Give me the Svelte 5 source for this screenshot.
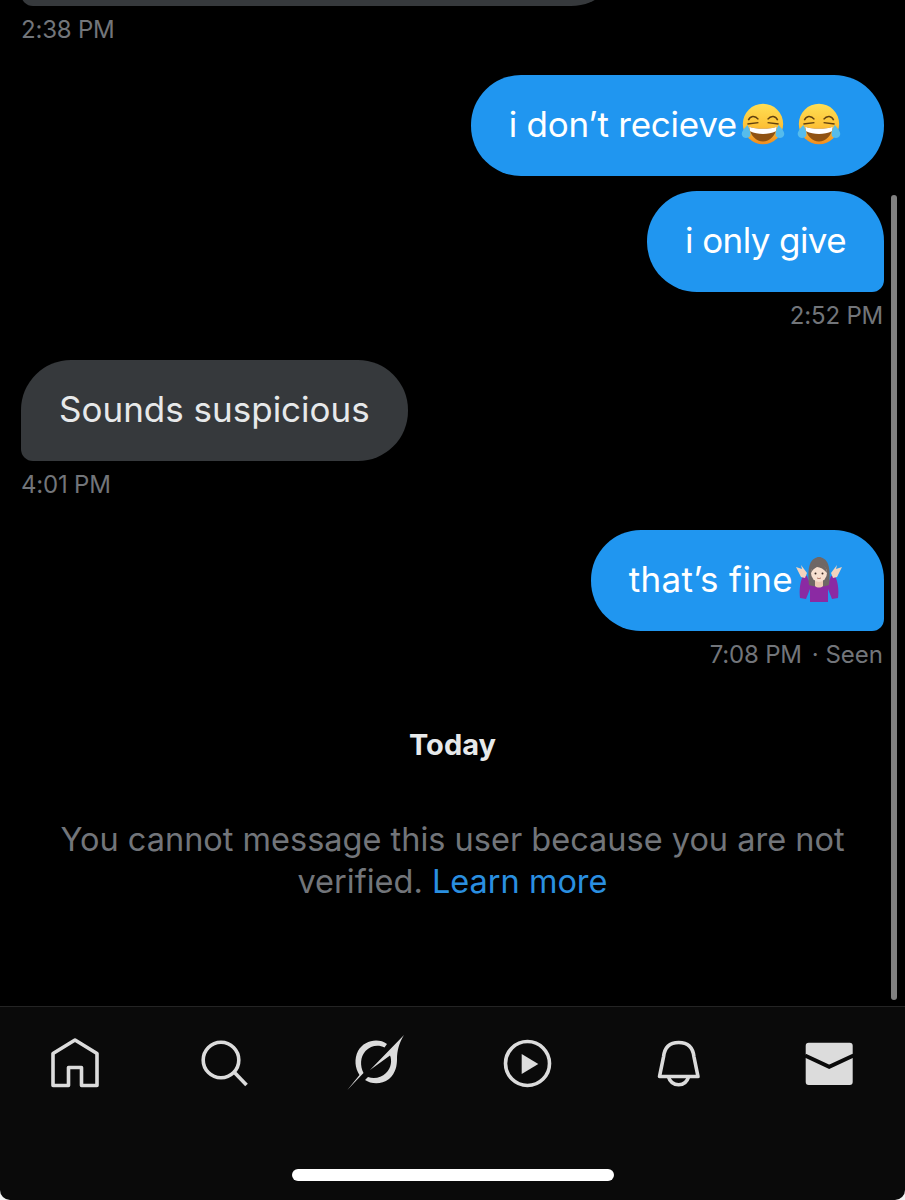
<script lang="ts">
  const tabs = ['home', 'search', 'explore', 'play', 'bell', 'mail'];
</script>

<div class="screen">
  <div class="messages">
    <div class="bubble theirs cut"></div>
    <div class="time">2:38 PM</div>

    <div class="bubble mine first">
      i don’t recieve<svg class="emoji laugh" viewBox="0 0 48 48">
        <use href="#laugh" />
      </svg><svg class="emoji laugh" viewBox="0 0 48 48">
        <use href="#laugh" />
      </svg>
    </div>
    <div class="bubble mine tight">i only give</div>
    <div class="time right short">2:52 PM</div>

    <div class="bubble theirs">Sounds suspicious</div>
    <div class="time">4:01 PM</div>

    <div class="bubble mine wide">
      that’s fine<svg class="emoji shrug" viewBox="0 0 48 46">
        <path d="M8 20 C5 26 4 34 5 42 L11 43 L15 33 L15 46 L33 46 L33 33 L37 43 L43 42 C44 34 43 26 40 20 L36 20 C35 24 33 27 30 28 L18 28 C15 27 13 24 12 20 Z" fill="#8b2aa3" />
        <path d="M1 11 L7 13 L6 9 L9 13 L12 17 L10 22 L6 21 Z M47 11 L41 13 L42 9 L39 13 L36 17 L38 22 L42 21 Z" fill="#f2d3bd" />
        <path d="M14 29 C13 20 13 14 15 8 C17 3 21 1 24 1 C27 1 31 3 33 8 C35 14 35 20 34 29 C28 31 20 31 14 29 Z" fill="#6f6765" />
        <path d="M20 24 H28 V30 C26 32 22 32 20 30 Z" fill="#eccab4" />
        <ellipse cx="24" cy="17" rx="8" ry="9" fill="#f8e0d0" />
        <path d="M16 17 C16 10 20 7 25 7 C29 8 32 12 32 17 C29 13 25 11 22 11 C20 12 17 14 16 17 Z" fill="#6f6765" />
        <circle cx="20.5" cy="17.5" r="1" fill="#3a2a24" />
        <circle cx="27.5" cy="17.5" r="1" fill="#3a2a24" />
        <path d="M22 22 Q24 23.2 26 22" stroke="#b57b6c" stroke-width="1" fill="none" />
      </svg>
    </div>
    <div class="time right"><span>7:08 PM</span><span class="seen">· Seen</span></div>

    <div class="today">Today</div>
    <p class="notice">
      You cannot message this user because you are not verified. <span class="link">Learn more</span>
    </p>
  </div>

  <div class="scrollbar"></div>

  <nav class="nav">
    <div class="tabs">
      {#each tabs as tab}
        <svg class="tab" viewBox="0 0 60 60">
          {#if tab === 'home'}
            <path class="line" d="M30 7 L52 20.5 V52.5 H36.5 V34.5 H23.5 V52.5 H8 V20.5 Z" />
          {:else if tab === 'search'}
            <circle class="line" cx="25" cy="27" r="17.8" />
            <path class="line" d="M38.5 39.5 L50.5 52" />
          {:else if tab === 'explore'}
            <path class="solid" d="M57 2 L23 37 L43 22.5 C45 27 44.5 35 39 40 C34 45 27 46 21 44 L18 47 C24 51 34 52 42 46 C49 40 50 32 50 26 C50 18 52 10 57 2 Z" />
            <path class="solid" d="M0.3 57 L12.5 42 C8 35 7 26 11 18 C15 11 22 7.5 29 7.5 C33 7.5 37 8.5 40 11 L37.5 14.5 C32 11.5 24 12 18.5 18 C13 24 13 33 16.5 40 Z" />
          {:else if tab === 'play'}
            <circle class="line" cx="29.5" cy="30.5" r="22" />
            <path class="solid" d="M23.7 21 L40.3 31 L23.7 41 Z" />
          {:else if tab === 'bell'}
            <path class="line" d="M10.5 43.5 L14.5 24 C15.5 14 21 9.5 29.7 9.5 C38.5 9.5 44 14 45 24 L49 43.5 Z" />
            <path class="line" d="M19.5 44 C21 49 25 51.7 29.7 51.7 C34.5 51.7 38 49 39.5 44" />
          {:else}
            <rect class="solid" x="5.7" y="9.7" width="47" height="42.3" rx="3" />
            <path class="flap" d="M5 22.5 L29.2 33.8 L53.5 22.5" />
          {/if}
        </svg>
      {/each}
    </div>
    <div class="home-indicator"></div>
  </nav>

  <svg class="defs" width="0" height="0">
    <defs>
      <linearGradient id="face" x1="0" y1="0" x2="0" y2="1">
        <stop offset="0%" stop-color="#ffdf55" />
        <stop offset="55%" stop-color="#fdc236" />
        <stop offset="100%" stop-color="#f08d1f" />
      </linearGradient>
      <g id="laugh">
        <circle cx="24" cy="24" r="22" fill="url(#face)" />
        <path d="M9 27 C16 30 32 30 39 27 C38 37 31 43 24 43 C17 43 10 37 9 27 Z" fill="#8f5212" />
        <path d="M9 27 C16 30 32 30 39 27 L38 32 C30 36 18 36 10 32 Z" fill="#fff" />
        <path d="M8 20 C10 15 15 14 19 19 M29 19 C33 14 38 15 40 20 M7 24 L19 22.5 M29 22.5 L41 24" stroke="#60400f" stroke-width="1.6" fill="none" />
        <path d="M7 25 C3 29 0 33 1 36 C2 40 8 40 10 37 C11 33 9 29 7 25 Z M41 25 C45 29 48 33 47 36 C46 40 40 40 38 37 C37 33 39 29 41 25 Z" fill="#55bcec" />
      </g>
    </defs>
  </svg>
</div>

<style>
  :global(body) {
    background: #000;
  }

  .screen {
    position: relative;
    width: 905px;
    height: 1200px;
    background: #f4f4f4;
    display: flex;
    flex-direction: column;
    overflow: hidden;
    font-family: Inter, "Liberation Sans", sans-serif;
  }

  .messages {
    height: 1006px;
    flex-shrink: 0;
    background: #000;
    display: flex;
    flex-direction: column;
    justify-content: flex-end;
    padding: 0 21px 103px;
    box-sizing: border-box;
  }

  .bubble {
    box-sizing: border-box;
    height: 101px;
    flex-shrink: 0;
    display: flex;
    align-items: center;
    padding: 0 38px 4px;
    font-size: 35px;
    border-radius: 50px;
  }

  .mine {
    align-self: flex-end;
    background: #2096f0;
    color: #fff;
    border-bottom-right-radius: 12px;
  }

  .mine.first {
    border-bottom-right-radius: 50px;
    margin-bottom: 15px;
    letter-spacing: -0.27px;
  }

  .mine.tight {
    letter-spacing: -0.6px;
  }

  .mine.wide {
    letter-spacing: 0.35px;
    padding-right: 41px;
  }

  .theirs {
    align-self: flex-start;
    background: #36393c;
    color: #e7e9ea;
    border-bottom-left-radius: 12px;
  }

  .theirs.cut {
    width: 600px;
  }

  .emoji {
    flex-shrink: 0;
    display: block;
  }

  .laugh {
    width: 44px;
    height: 44px;
    margin-left: 4px;
    margin-right: 5px;
  }

  .laugh + .laugh {
    margin-left: 7px;
  }

  .shrug {
    width: 48px;
    height: 46px;
    margin-left: 2px;
  }

  .time {
    height: 48px;
    flex-shrink: 0;
    margin-bottom: 21px;
    padding-top: 8px;
    box-sizing: border-box;
    font-size: 24px;
    line-height: 32px;
    color: #72757a;
    letter-spacing: -0.2px;
  }

  .time.short {
    margin-bottom: 20px;
  }

  .time.right {
    align-self: flex-end;
    margin-right: 1px;
  }

  .seen {
    margin-left: 10px;
    letter-spacing: 0;
  }

  .today {
    flex-shrink: 0;
    text-align: center;
    font-size: 29px;
    font-weight: 700;
    color: #e7e9ea;
    line-height: 34px;
    margin-top: 28px;
  }

  .notice {
    flex-shrink: 0;
    margin: 57px 25px 0;
    text-align: center;
    font-size: 32.5px;
    line-height: 42px;
    color: #72757a;
  }

  .link {
    color: #2a8fe0;
  }

  .scrollbar {
    position: absolute;
    left: 891px;
    top: 195px;
    width: 6px;
    height: 805px;
    border-radius: 3px;
    background: #808080;
  }

  .nav {
    flex: 1;
    background: #0a0a0a;
    border-top: 1px solid #242424;
    border-radius: 0 0 10px 10px;
  }

  .tabs {
    display: grid;
    grid-template-columns: repeat(6, 1fr);
    justify-items: center;
    padding-top: 26px;
  }

  .tab {
    width: 60px;
    height: 60px;
    display: block;
  }

  .line {
    fill: none;
    stroke: #dcdcdc;
    stroke-width: 3.6;
    stroke-linejoin: round;
  }

  .solid {
    fill: #dcdcdc;
  }

  .flap {
    fill: none;
    stroke: #0a0a0a;
    stroke-width: 4;
  }

  .home-indicator {
    width: 322px;
    height: 12px;
    margin: 76px auto 0;
    border-radius: 6px;
    background: #fff;
  }

  .defs {
    position: absolute;
  }
</style>
